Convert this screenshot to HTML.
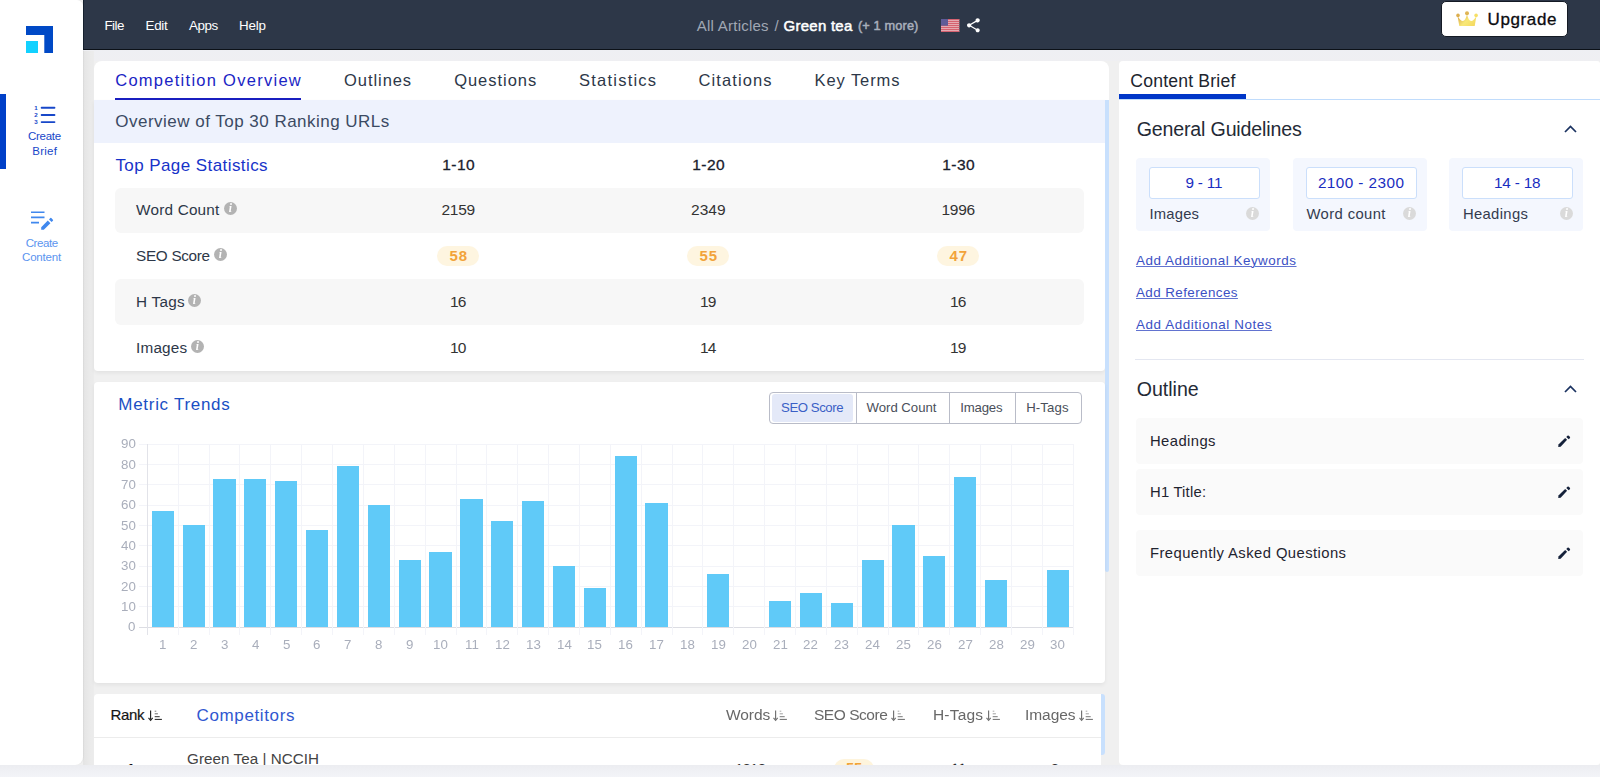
<!DOCTYPE html>
<html lang="en">
<head>
<meta charset="utf-8">
<title>Content Brief - Green tea</title>
<style>

*{box-sizing:border-box;margin:0;padding:0}
html,body{width:1600px;height:777px;overflow:hidden;background:#f0f0f0}
body{font-family:"Liberation Sans",Arial,sans-serif;color:#2d3748}
#app{position:relative;width:1600px;height:777px;overflow:hidden;background:#f0f0f0}
.w{display:contents}
.b{position:absolute}
.t{position:absolute;white-space:pre;display:block}
svg{position:absolute;overflow:visible}
.g{will-change:transform}
.u{text-decoration:underline;text-underline-offset:1px;text-decoration-thickness:1px;text-decoration-color:rgba(59,80,196,.8)}

</style>
</head>
<body>
<div id="app">
<div class="b " style="left:83px;top:49px;width:1517px;height:12px;background:linear-gradient(#eeeff3,#efeff2);"></div>
<aside class="w" aria-label="Sidebar">
<div class="b " style="left:83px;top:51px;width:11px;height:714px;background:linear-gradient(to right,#e4e4e4,#eaeaea 60%,#ececec);"></div>
<div class="b sidebar" style="left:0px;top:0px;width:83px;height:765px;background:#fff;border-radius:0 6px 8px 0;box-shadow:1px 0 1px rgba(0,0,0,.04)"></div>
<svg style="left:26px;top:26px" width="27" height="27" viewBox="0 0 27 27"><path d="M0 0H27V27H18.3V8.9H0Z" fill="#0049c6"/><rect x="0" y="15" width="12" height="12" fill="#12d1ff"/></svg>
<div class="b " style="left:0px;top:94px;width:6px;height:75px;background:#0040c8;"></div>
<svg style="left:33px;top:105px" width="24" height="20" viewBox="0 0 24 20" fill="none">
<path d="M8.600 2.750H21.500M8.600 10H21.500M8.600 17.100H21.500" stroke="#1747c9" stroke-width="1.800" stroke-linecap="round"/>
<text x="1.200" y="4.900" font-size="6.200" font-weight="700" fill="#1747c9" font-family="Liberation Sans,sans-serif">1</text>
<text x="1.200" y="12.100" font-size="6.200" font-weight="700" fill="#1747c9" font-family="Liberation Sans,sans-serif">2</text>
<text x="1.200" y="19.400" font-size="6.200" font-weight="700" fill="#1747c9" font-family="Liberation Sans,sans-serif">3</text>
</svg>
<span class="t " style="left:28.10px;top:128px;font-size:11.5px;line-height:16px;color:#1747c9;letter-spacing:-0.306px;">Create</span>
<span class="t " style="left:32.35px;top:143px;font-size:11.5px;line-height:16px;color:#1747c9;letter-spacing:0.211px;">Brief</span>
<svg style="left:30px;top:210px" width="24" height="21" viewBox="0 0 24 21" fill="none">
<path d="M1 2.2H14.5M1 7.4H14.5M1 12.6H9" stroke="#4088ee" stroke-width="1.6"/>
<path d="M11.2 19.8v-2.6l6.6-6.6 2.6 2.6-6.6 6.6zM19 9.4l1.3-1.3a.7.7 0 0 1 1 0l1.6 1.6a.7.7 0 0 1 0 1l-1.3 1.3z" fill="#4088ee"/>
</svg>
<span class="t " style="left:25.65px;top:235px;font-size:11.5px;line-height:16px;color:#5b94ef;letter-spacing:-0.406px;">Create</span>
<span class="t " style="left:22.10px;top:249px;font-size:11.5px;line-height:16px;color:#5b94ef;letter-spacing:-0.214px;">Content</span>
</aside>
<header class="w">
<div class="b topbar" style="left:83px;top:0px;width:1517px;height:49.5px;background:#2d3748;border-bottom:1.5px solid #0c1118;border-left:1px solid #15202e"></div>
<span class="t " style="left:104.40px;top:16px;font-size:13.4px;line-height:19px;color:#fff;letter-spacing:-0.493px;">File</span>
<span class="t " style="left:145.60px;top:16px;font-size:13.4px;line-height:19px;color:#fff;letter-spacing:-0.326px;">Edit</span>
<span class="t " style="left:188.90px;top:16px;font-size:13.4px;line-height:19px;color:#fff;letter-spacing:-0.410px;">Apps</span>
<span class="t " style="left:239.00px;top:16px;font-size:13.4px;line-height:19px;color:#fff;letter-spacing:-0.182px;">Help</span>
<span class="t " style="left:696.80px;top:15px;font-size:15px;line-height:21px;color:#a0a7b4;letter-spacing:0.237px;">All Articles</span>
<span class="t " style="left:774.50px;top:15px;font-size:15px;line-height:21px;color:#a0a7b4;">/</span>
<span class="t " style="left:783.50px;top:15px;font-size:15px;line-height:21px;color:#fff;letter-spacing:0.260px;-webkit-text-stroke:.5px #fff">Green tea</span>
<span class="t " style="left:857.90px;top:16px;font-size:12.8px;line-height:19px;color:#a8aebb;letter-spacing:0.123px;-webkit-text-stroke:.5px #a8aebb">(+ 1 more)</span>
<svg style="left:941px;top:19px" width="18.300" height="13" viewBox="0 0 18.300 13">
<rect width="18.300" height="13" fill="#e5a9b2"/>
<path d="M0 .5H18.300M0 2.500H18.300M0 4.500H18.300M0 6.500H18.300M0 8.500H18.300M0 10.500H18.300M0 12.500H18.300" stroke="#d5616f" stroke-width="1"/>
<rect width="7" height="6.700" fill="#5f5b97"/>
</svg>
<svg style="left:966.8px;top:17.8px" width="12.8" height="14.6" viewBox="3 2 18 20" fill="#fff">
<path d="M18 16.08c-.76 0-1.44.3-1.96.77L8.91 12.7c.05-.23.09-.46.09-.7s-.04-.47-.09-.7l7.05-4.11c.54.5 1.25.81 2.04.81 1.66 0 3-1.34 3-3s-1.34-3-3-3-3 1.34-3 3c0 .24.04.47.09.7L8.04 9.81C7.5 9.31 6.79 9 6 9c-1.66 0-3 1.34-3 3s1.34 3 3 3c.79 0 1.5-.31 2.04-.81l7.12 4.16c-.05.21-.08.43-.08.65 0 1.61 1.31 2.92 2.92 2.92 1.61 0 2.92-1.31 2.92-2.92s-1.31-2.92-2.92-2.92z"/></svg>
<div class="b upgrade" style="left:1441px;top:1px;width:127px;height:36px;background:#fff;border-radius:5px;border:1px solid #141a24"></div>
<svg style="left:1456px;top:11px" width="22" height="15" viewBox="0 0 22 15">
<defs><linearGradient id="cg" x1="0" y1="0.2" x2="1" y2="0.8"><stop offset="0" stop-color="#d9a94a"/><stop offset=".5" stop-color="#f8e878"/><stop offset="1" stop-color="#f4d95f"/></linearGradient></defs>
<path d="M3.3 15 1.6 5.2C3.6 8.4 5.2 10 6.8 10 8.6 10 10 7.4 11 3.6 12 7.4 13.4 10 15.2 10 16.800 10 18.4 8.400 20.400 5.200L18.700 15Z" fill="url(#cg)"/>
<circle cx="11" cy="2.300" r="2" fill="#dfb555"/><circle cx="2" cy="4.400" r="1.800" fill="#dcae4f"/><circle cx="20.100" cy="4.400" r="1.800" fill="#f6df66"/>
</svg>
<span class="t " style="left:1487.50px;top:8px;font-size:17px;line-height:23px;color:#0b0b0f;letter-spacing:0.630px;-webkit-text-stroke:.3px #0b0b0f">Upgrade</span>
</header>
<main class="w">
<nav class="w" aria-label="Tabs">
<div class="b tabs" style="left:94px;top:61px;width:1015px;height:39.5px;background:#fff;border-radius:8px 8px 0 0"></div>
<span class="t " style="left:115.20px;top:69px;font-size:16.5px;line-height:22px;color:#1a24c4;letter-spacing:1.274px;">Competition Overview</span>
<div class="b " style="left:115px;top:98.2px;width:186px;height:1.8px;background:#1a1fc0;"></div>
<span class="t " style="left:344.10px;top:69px;font-size:16.5px;line-height:22px;color:#2d3748;letter-spacing:0.924px;">Outlines</span>
<span class="t " style="left:454.20px;top:69px;font-size:16.5px;line-height:22px;color:#2d3748;letter-spacing:0.963px;">Questions</span>
<span class="t " style="left:579.10px;top:69px;font-size:16.5px;line-height:22px;color:#2d3748;letter-spacing:1.219px;">Statistics</span>
<span class="t " style="left:698.50px;top:69px;font-size:16.5px;line-height:22px;color:#2d3748;letter-spacing:1.100px;">Citations</span>
<span class="t " style="left:814.50px;top:69px;font-size:16.5px;line-height:22px;color:#2d3748;letter-spacing:0.920px;">Key Terms</span>
</nav>
<section class="w" aria-label="Overview">
<div class="b panel" style="left:94px;top:100px;width:1011px;height:271px;background:#fff;border-radius:0 0 4px 4px;box-shadow:0 2px 4px rgba(0,0,0,.06)"></div>
<div class="b " style="left:94px;top:100px;width:1011px;height:42.6px;background:#eef2fd;"></div>
<span class="t " style="left:115.30px;top:110px;font-size:17px;line-height:23px;color:#3b4a63;letter-spacing:0.482px;">Overview of Top 30 Ranking URLs</span>
<span class="t " style="left:115.40px;top:154px;font-size:17px;line-height:23px;color:#1733c9;letter-spacing:0.423px;">Top Page Statistics</span>
<span class="t " style="left:442.30px;top:154px;font-size:15.5px;line-height:21px;color:#1a202c;letter-spacing:0.456px;-webkit-text-stroke:.3px #1a202c">1-10</span>
<span class="t " style="left:692.30px;top:154px;font-size:15.5px;line-height:21px;color:#1a202c;letter-spacing:0.456px;-webkit-text-stroke:.3px #1a202c">1-20</span>
<span class="t " style="left:942.30px;top:154px;font-size:15.5px;line-height:21px;color:#1a202c;letter-spacing:0.456px;-webkit-text-stroke:.3px #1a202c">1-30</span>
<div class="b " style="left:115px;top:187.9px;width:969px;height:45.3px;background:#f7f7f7;border-radius:6px"></div>
<span class="t " style="left:136.10px;top:199px;font-size:15.3px;line-height:21px;color:#2d3748;letter-spacing:0.206px;">Word Count</span>
<div class="b g" style="left:223.9px;top:202.2px;width:13px;height:13px;border-radius:50%;background:#b3b3b3;color:#fff;font:italic 700 11.5px/13px 'Liberation Serif',serif;text-align:center;text-indent:-.5px">i</div>
<span class="t " style="left:441.55px;top:199px;font-size:15.5px;line-height:21px;color:#333;letter-spacing:-0.328px;">2159</span>
<span class="t " style="left:691.05px;top:199px;font-size:15.5px;line-height:21px;color:#333;letter-spacing:0.005px;">2349</span>
<span class="t " style="left:941.55px;top:199px;font-size:15.5px;line-height:21px;color:#333;letter-spacing:-0.328px;">1996</span>
<span class="t " style="left:136.10px;top:245px;font-size:15.3px;line-height:21px;color:#2d3748;letter-spacing:-0.314px;">SEO Score</span>
<div class="b g" style="left:213.7px;top:248.2px;width:13px;height:13px;border-radius:50%;background:#b3b3b3;color:#fff;font:italic 700 11.5px/13px 'Liberation Serif',serif;text-align:center;text-indent:-.5px">i</div>
<div class="b " style="left:437.3px;top:246.3px;width:42px;height:20px;background:#fef5e0;border-radius:10px"></div>
<span class="t " style="left:449.40px;top:245px;font-size:15px;line-height:21px;color:#f2a33a;font-weight:700;letter-spacing:1.113px;">58</span>
<div class="b " style="left:687.3px;top:246.3px;width:42px;height:20px;background:#fef5e0;border-radius:10px"></div>
<span class="t " style="left:699.40px;top:245px;font-size:15px;line-height:21px;color:#f2a33a;font-weight:700;letter-spacing:1.113px;">55</span>
<div class="b " style="left:937.3px;top:246.3px;width:42px;height:20px;background:#fef5e0;border-radius:10px"></div>
<span class="t " style="left:949.40px;top:245px;font-size:15px;line-height:21px;color:#f2a33a;font-weight:700;letter-spacing:1.113px;">47</span>
<div class="b " style="left:115px;top:279.4px;width:969px;height:45.3px;background:#f7f7f7;border-radius:6px"></div>
<span class="t " style="left:136.10px;top:291px;font-size:15.3px;line-height:21px;color:#2d3748;letter-spacing:0.231px;">H Tags</span>
<div class="b g" style="left:188.2px;top:294.2px;width:13px;height:13px;border-radius:50%;background:#b3b3b3;color:#fff;font:italic 700 11.5px/13px 'Liberation Serif',serif;text-align:center;text-indent:-.5px">i</div>
<span class="t " style="left:450.10px;top:291px;font-size:15.5px;line-height:21px;color:#333;letter-spacing:-0.850px;">16</span>
<span class="t " style="left:700.10px;top:291px;font-size:15.5px;line-height:21px;color:#333;letter-spacing:-0.850px;">19</span>
<span class="t " style="left:950.10px;top:291px;font-size:15.5px;line-height:21px;color:#333;letter-spacing:-0.850px;">16</span>
<span class="t " style="left:136.10px;top:337px;font-size:15.3px;line-height:21px;color:#2d3748;letter-spacing:0.166px;">Images</span>
<div class="b g" style="left:190.5px;top:340.2px;width:13px;height:13px;border-radius:50%;background:#b3b3b3;color:#fff;font:italic 700 11.5px/13px 'Liberation Serif',serif;text-align:center;text-indent:-.5px">i</div>
<span class="t " style="left:450.10px;top:337px;font-size:15.5px;line-height:21px;color:#333;letter-spacing:-0.850px;">10</span>
<span class="t " style="left:700.10px;top:337px;font-size:15.5px;line-height:21px;color:#333;letter-spacing:-0.850px;">14</span>
<span class="t " style="left:950.10px;top:337px;font-size:15.5px;line-height:21px;color:#333;letter-spacing:-0.850px;">19</span>
<div class="b " style="left:1105px;top:100px;width:4px;height:472px;background:#c8e0fd;border-radius:0 0 3px 3px"></div>
</section>
<section class="w" aria-label="Metric Trends">
<div class="b panel" style="left:94px;top:382px;width:1011px;height:301px;background:#fff;border-radius:4px;box-shadow:0 2px 4px rgba(0,0,0,.06)"></div>
<span class="t " style="left:118.30px;top:393px;font-size:17px;line-height:23px;color:#1a4fc4;letter-spacing:0.710px;">Metric Trends</span>
<div class="b " style="left:769px;top:392px;width:313px;height:32px;background:#fff;border:1px solid #b9bcc8;border-radius:4px"></div>
<div class="b " style="left:772px;top:394px;width:81px;height:28px;background:#e4e9f8;border-radius:3px"></div>
<div class="b " style="left:856px;top:393px;width:1px;height:30px;background:#b9bcc8;"></div>
<div class="b " style="left:949px;top:393px;width:1px;height:30px;background:#b9bcc8;"></div>
<div class="b " style="left:1015px;top:393px;width:1px;height:30px;background:#b9bcc8;"></div>
<span class="t " style="left:781.05px;top:398px;font-size:13.2px;line-height:19px;color:#3a5fc6;letter-spacing:-0.434px;">SEO Score</span>
<span class="t " style="left:866.50px;top:398px;font-size:13.2px;line-height:19px;color:#4a4f5a;letter-spacing:-0.014px;">Word Count</span>
<span class="t " style="left:960.15px;top:398px;font-size:13.2px;line-height:19px;color:#4a4f5a;letter-spacing:-0.150px;">Images</span>
<span class="t " style="left:1026.15px;top:398px;font-size:13.2px;line-height:19px;color:#4a4f5a;letter-spacing:0.144px;">H-Tags</span>
<div class="b " style="left:138.9px;top:626.6px;width:934.3px;height:1px;background:#dcdde3;"></div>
<span class="t g" style="left:127.99px;top:617px;font-size:13.3px;line-height:19px;color:#a9aebb;">0</span>
<div class="b " style="left:138.9px;top:606.27px;width:934.3px;height:1px;background:#f3f4f9;"></div>
<span class="t g" style="left:120.60px;top:597px;font-size:13.3px;line-height:19px;color:#a9aebb;">10</span>
<div class="b " style="left:138.9px;top:585.93px;width:934.3px;height:1px;background:#f3f4f9;"></div>
<span class="t g" style="left:120.60px;top:577px;font-size:13.3px;line-height:19px;color:#a9aebb;">20</span>
<div class="b " style="left:138.9px;top:565.6px;width:934.3px;height:1px;background:#f3f4f9;"></div>
<span class="t g" style="left:120.60px;top:556px;font-size:13.3px;line-height:19px;color:#a9aebb;">30</span>
<div class="b " style="left:138.9px;top:545.27px;width:934.3px;height:1px;background:#f3f4f9;"></div>
<span class="t g" style="left:120.60px;top:536px;font-size:13.3px;line-height:19px;color:#a9aebb;">40</span>
<div class="b " style="left:138.9px;top:524.93px;width:934.3px;height:1px;background:#f3f4f9;"></div>
<span class="t g" style="left:120.60px;top:516px;font-size:13.3px;line-height:19px;color:#a9aebb;">50</span>
<div class="b " style="left:138.9px;top:504.6px;width:934.3px;height:1px;background:#f3f4f9;"></div>
<span class="t g" style="left:120.60px;top:495px;font-size:13.3px;line-height:19px;color:#a9aebb;">60</span>
<div class="b " style="left:138.9px;top:484.27px;width:934.3px;height:1px;background:#f3f4f9;"></div>
<span class="t g" style="left:120.60px;top:475px;font-size:13.3px;line-height:19px;color:#a9aebb;">70</span>
<div class="b " style="left:138.9px;top:463.93px;width:934.3px;height:1px;background:#f3f4f9;"></div>
<span class="t g" style="left:120.60px;top:455px;font-size:13.3px;line-height:19px;color:#a9aebb;">80</span>
<div class="b " style="left:138.9px;top:443.6px;width:934.3px;height:1px;background:#f3f4f9;"></div>
<span class="t g" style="left:120.60px;top:434px;font-size:13.3px;line-height:19px;color:#a9aebb;">90</span>
<div class="b " style="left:146.9px;top:444.1px;width:1px;height:191.0px;background:#e2e3e9;"></div>
<div class="b " style="left:177.76px;top:444.1px;width:1px;height:191.0px;background:#f3f4f9;"></div>
<div class="b " style="left:208.62px;top:444.1px;width:1px;height:191.0px;background:#f3f4f9;"></div>
<div class="b " style="left:239.48px;top:444.1px;width:1px;height:191.0px;background:#f3f4f9;"></div>
<div class="b " style="left:270.34px;top:444.1px;width:1px;height:191.0px;background:#f3f4f9;"></div>
<div class="b " style="left:301.2px;top:444.1px;width:1px;height:191.0px;background:#f3f4f9;"></div>
<div class="b " style="left:332.06px;top:444.1px;width:1px;height:191.0px;background:#f3f4f9;"></div>
<div class="b " style="left:362.92px;top:444.1px;width:1px;height:191.0px;background:#f3f4f9;"></div>
<div class="b " style="left:393.78px;top:444.1px;width:1px;height:191.0px;background:#f3f4f9;"></div>
<div class="b " style="left:424.64px;top:444.1px;width:1px;height:191.0px;background:#f3f4f9;"></div>
<div class="b " style="left:455.5px;top:444.1px;width:1px;height:191.0px;background:#f3f4f9;"></div>
<div class="b " style="left:486.36px;top:444.1px;width:1px;height:191.0px;background:#f3f4f9;"></div>
<div class="b " style="left:517.22px;top:444.1px;width:1px;height:191.0px;background:#f3f4f9;"></div>
<div class="b " style="left:548.08px;top:444.1px;width:1px;height:191.0px;background:#f3f4f9;"></div>
<div class="b " style="left:578.94px;top:444.1px;width:1px;height:191.0px;background:#f3f4f9;"></div>
<div class="b " style="left:609.8px;top:444.1px;width:1px;height:191.0px;background:#f3f4f9;"></div>
<div class="b " style="left:640.66px;top:444.1px;width:1px;height:191.0px;background:#f3f4f9;"></div>
<div class="b " style="left:671.52px;top:444.1px;width:1px;height:191.0px;background:#f3f4f9;"></div>
<div class="b " style="left:702.38px;top:444.1px;width:1px;height:191.0px;background:#f3f4f9;"></div>
<div class="b " style="left:733.24px;top:444.1px;width:1px;height:191.0px;background:#f3f4f9;"></div>
<div class="b " style="left:764.1px;top:444.1px;width:1px;height:191.0px;background:#f3f4f9;"></div>
<div class="b " style="left:794.96px;top:444.1px;width:1px;height:191.0px;background:#f3f4f9;"></div>
<div class="b " style="left:825.82px;top:444.1px;width:1px;height:191.0px;background:#f3f4f9;"></div>
<div class="b " style="left:856.68px;top:444.1px;width:1px;height:191.0px;background:#f3f4f9;"></div>
<div class="b " style="left:887.54px;top:444.1px;width:1px;height:191.0px;background:#f3f4f9;"></div>
<div class="b " style="left:918.4px;top:444.1px;width:1px;height:191.0px;background:#f3f4f9;"></div>
<div class="b " style="left:949.26px;top:444.1px;width:1px;height:191.0px;background:#f3f4f9;"></div>
<div class="b " style="left:980.12px;top:444.1px;width:1px;height:191.0px;background:#f3f4f9;"></div>
<div class="b " style="left:1010.98px;top:444.1px;width:1px;height:191.0px;background:#f3f4f9;"></div>
<div class="b " style="left:1041.84px;top:444.1px;width:1px;height:191.0px;background:#f3f4f9;"></div>
<div class="b " style="left:1072.7px;top:444.1px;width:1px;height:191.0px;background:#f3f4f9;"></div>
<div class="b " style="left:151.73px;top:511.2px;width:22.2px;height:115.9px;background:#60caf8;"></div>
<span class="t g" style="left:159.13px;top:635px;font-size:13.3px;line-height:19px;color:#a9aebb;">1</span>
<div class="b " style="left:182.59px;top:525.43px;width:22.2px;height:101.67px;background:#60caf8;"></div>
<span class="t g" style="left:189.99px;top:635px;font-size:13.3px;line-height:19px;color:#a9aebb;">2</span>
<div class="b " style="left:213.45px;top:478.67px;width:22.2px;height:148.43px;background:#60caf8;"></div>
<span class="t g" style="left:220.85px;top:635px;font-size:13.3px;line-height:19px;color:#a9aebb;">3</span>
<div class="b " style="left:244.31px;top:478.67px;width:22.2px;height:148.43px;background:#60caf8;"></div>
<span class="t g" style="left:251.71px;top:635px;font-size:13.3px;line-height:19px;color:#a9aebb;">4</span>
<div class="b " style="left:275.17px;top:480.7px;width:22.2px;height:146.4px;background:#60caf8;"></div>
<span class="t g" style="left:282.57px;top:635px;font-size:13.3px;line-height:19px;color:#a9aebb;">5</span>
<div class="b " style="left:306.03px;top:529.5px;width:22.2px;height:97.6px;background:#60caf8;"></div>
<span class="t g" style="left:313.43px;top:635px;font-size:13.3px;line-height:19px;color:#a9aebb;">6</span>
<div class="b " style="left:336.89px;top:466.47px;width:22.2px;height:160.63px;background:#60caf8;"></div>
<span class="t g" style="left:344.29px;top:635px;font-size:13.3px;line-height:19px;color:#a9aebb;">7</span>
<div class="b " style="left:367.75px;top:505.1px;width:22.2px;height:122.0px;background:#60caf8;"></div>
<span class="t g" style="left:375.15px;top:635px;font-size:13.3px;line-height:19px;color:#a9aebb;">8</span>
<div class="b " style="left:398.61px;top:560.0px;width:22.2px;height:67.1px;background:#60caf8;"></div>
<span class="t g" style="left:406.01px;top:635px;font-size:13.3px;line-height:19px;color:#a9aebb;">9</span>
<div class="b " style="left:429.47px;top:551.87px;width:22.2px;height:75.23px;background:#60caf8;"></div>
<span class="t g" style="left:433.17px;top:635px;font-size:13.3px;line-height:19px;color:#a9aebb;">10</span>
<div class="b " style="left:460.33px;top:499.0px;width:22.2px;height:128.1px;background:#60caf8;"></div>
<span class="t g" style="left:464.52px;top:635px;font-size:13.3px;line-height:19px;color:#a9aebb;">11</span>
<div class="b " style="left:491.19px;top:521.37px;width:22.2px;height:105.73px;background:#60caf8;"></div>
<span class="t g" style="left:494.89px;top:635px;font-size:13.3px;line-height:19px;color:#a9aebb;">12</span>
<div class="b " style="left:522.05px;top:501.03px;width:22.2px;height:126.07px;background:#60caf8;"></div>
<span class="t g" style="left:525.75px;top:635px;font-size:13.3px;line-height:19px;color:#a9aebb;">13</span>
<div class="b " style="left:552.91px;top:566.1px;width:22.2px;height:61.0px;background:#60caf8;"></div>
<span class="t g" style="left:556.61px;top:635px;font-size:13.3px;line-height:19px;color:#a9aebb;">14</span>
<div class="b " style="left:583.77px;top:588.47px;width:22.2px;height:38.63px;background:#60caf8;"></div>
<span class="t g" style="left:587.47px;top:635px;font-size:13.3px;line-height:19px;color:#a9aebb;">15</span>
<div class="b " style="left:614.63px;top:456.3px;width:22.2px;height:170.8px;background:#60caf8;"></div>
<span class="t g" style="left:618.33px;top:635px;font-size:13.3px;line-height:19px;color:#a9aebb;">16</span>
<div class="b " style="left:645.49px;top:503.07px;width:22.2px;height:124.03px;background:#60caf8;"></div>
<span class="t g" style="left:649.19px;top:635px;font-size:13.3px;line-height:19px;color:#a9aebb;">17</span>
<span class="t g" style="left:680.05px;top:635px;font-size:13.3px;line-height:19px;color:#a9aebb;">18</span>
<div class="b " style="left:707.21px;top:574.23px;width:22.2px;height:52.87px;background:#60caf8;"></div>
<span class="t g" style="left:710.91px;top:635px;font-size:13.3px;line-height:19px;color:#a9aebb;">19</span>
<span class="t g" style="left:741.77px;top:635px;font-size:13.3px;line-height:19px;color:#a9aebb;">20</span>
<div class="b " style="left:768.93px;top:600.67px;width:22.2px;height:26.43px;background:#60caf8;"></div>
<span class="t g" style="left:772.63px;top:635px;font-size:13.3px;line-height:19px;color:#a9aebb;">21</span>
<div class="b " style="left:799.79px;top:592.53px;width:22.2px;height:34.57px;background:#60caf8;"></div>
<span class="t g" style="left:803.49px;top:635px;font-size:13.3px;line-height:19px;color:#a9aebb;">22</span>
<div class="b " style="left:830.65px;top:602.7px;width:22.2px;height:24.4px;background:#60caf8;"></div>
<span class="t g" style="left:834.35px;top:635px;font-size:13.3px;line-height:19px;color:#a9aebb;">23</span>
<div class="b " style="left:861.51px;top:560.0px;width:22.2px;height:67.1px;background:#60caf8;"></div>
<span class="t g" style="left:865.21px;top:635px;font-size:13.3px;line-height:19px;color:#a9aebb;">24</span>
<div class="b " style="left:892.37px;top:525.43px;width:22.2px;height:101.67px;background:#60caf8;"></div>
<span class="t g" style="left:896.07px;top:635px;font-size:13.3px;line-height:19px;color:#a9aebb;">25</span>
<div class="b " style="left:923.23px;top:555.93px;width:22.2px;height:71.17px;background:#60caf8;"></div>
<span class="t g" style="left:926.93px;top:635px;font-size:13.3px;line-height:19px;color:#a9aebb;">26</span>
<div class="b " style="left:954.09px;top:476.63px;width:22.2px;height:150.47px;background:#60caf8;"></div>
<span class="t g" style="left:957.79px;top:635px;font-size:13.3px;line-height:19px;color:#a9aebb;">27</span>
<div class="b " style="left:984.95px;top:580.33px;width:22.2px;height:46.77px;background:#60caf8;"></div>
<span class="t g" style="left:988.65px;top:635px;font-size:13.3px;line-height:19px;color:#a9aebb;">28</span>
<span class="t g" style="left:1019.51px;top:635px;font-size:13.3px;line-height:19px;color:#a9aebb;">29</span>
<div class="b " style="left:1046.67px;top:570.17px;width:22.2px;height:56.93px;background:#60caf8;"></div>
<span class="t g" style="left:1050.37px;top:635px;font-size:13.3px;line-height:19px;color:#a9aebb;">30</span>
</section>
<section class="w" aria-label="Competitors">
<div class="b panel" style="left:94px;top:693.6px;width:1007px;height:80px;background:#fff;border-radius:4px 0 0 0"></div>
<div class="b " style="left:1101px;top:693.6px;width:4px;height:61.2px;background:#c8e0fd;border-radius:0 3px 3px 0"></div>
<div class="b " style="left:94px;top:737px;width:1007px;height:1px;background:#ececec;"></div>
<span class="t " style="left:110.60px;top:704px;font-size:15px;line-height:21px;color:#151515;letter-spacing:-0.377px;-webkit-text-stroke:.2px #151515">Rank</span>
<svg style="left:148.4px;top:710px" width="14" height="11" viewBox="0 0 14 11" fill="none" stroke="#222"><path d="M2.6 .5V9.6" stroke-width="1.15"/><path d="M.5 7.9 2.6 10.3 4.7 7.9" stroke-width="1.15"/><path d="M6.7 1.2H8.3" stroke-width=".8" opacity=".75"/><path d="M6.7 3.8H9.9" stroke-width=".85" opacity=".8"/><path d="M6.7 6.7H11.7" stroke-width=".95"/><path d="M6.7 9.4H13.9" stroke-width="1.05"/></svg>
<span class="t " style="left:196.50px;top:704px;font-size:17px;line-height:23px;color:#3158d0;letter-spacing:0.636px;">Competitors</span>
<span class="t g" style="left:725.50px;top:704px;font-size:15.5px;line-height:21px;color:#686868;letter-spacing:-0.054px;">Words</span>
<svg style="left:773px;top:710px" width="14" height="11" viewBox="0 0 14 11" fill="none" stroke="#707070"><path d="M2.6 .5V9.6" stroke-width="1.15"/><path d="M.5 7.9 2.6 10.3 4.7 7.9" stroke-width="1.15"/><path d="M6.7 1.2H8.3" stroke-width=".8" opacity=".75"/><path d="M6.7 3.8H9.9" stroke-width=".85" opacity=".8"/><path d="M6.7 6.7H11.7" stroke-width=".95"/><path d="M6.7 9.4H13.9" stroke-width="1.05"/></svg>
<span class="t g" style="left:814.20px;top:704px;font-size:15.5px;line-height:21px;color:#686868;letter-spacing:-0.466px;">SEO Score</span>
<svg style="left:891px;top:710px" width="14" height="11" viewBox="0 0 14 11" fill="none" stroke="#707070"><path d="M2.6 .5V9.6" stroke-width="1.15"/><path d="M.5 7.9 2.6 10.3 4.7 7.9" stroke-width="1.15"/><path d="M6.7 1.2H8.3" stroke-width=".8" opacity=".75"/><path d="M6.7 3.8H9.9" stroke-width=".85" opacity=".8"/><path d="M6.7 6.7H11.7" stroke-width=".95"/><path d="M6.7 9.4H13.9" stroke-width="1.05"/></svg>
<span class="t g" style="left:932.50px;top:704px;font-size:15.5px;line-height:21px;color:#686868;letter-spacing:0.178px;">H-Tags</span>
<svg style="left:986px;top:710px" width="14" height="11" viewBox="0 0 14 11" fill="none" stroke="#707070"><path d="M2.6 .5V9.6" stroke-width="1.15"/><path d="M.5 7.9 2.6 10.3 4.7 7.9" stroke-width="1.15"/><path d="M6.7 1.2H8.3" stroke-width=".8" opacity=".75"/><path d="M6.7 3.8H9.9" stroke-width=".85" opacity=".8"/><path d="M6.7 6.7H11.7" stroke-width=".95"/><path d="M6.7 9.4H13.9" stroke-width="1.05"/></svg>
<span class="t g" style="left:1025.00px;top:704px;font-size:15.5px;line-height:21px;color:#686868;letter-spacing:-0.049px;">Images</span>
<svg style="left:1079px;top:710px" width="14" height="11" viewBox="0 0 14 11" fill="none" stroke="#707070"><path d="M2.6 .5V9.6" stroke-width="1.15"/><path d="M.5 7.9 2.6 10.3 4.7 7.9" stroke-width="1.15"/><path d="M6.7 1.2H8.3" stroke-width=".8" opacity=".75"/><path d="M6.7 3.8H9.9" stroke-width=".85" opacity=".8"/><path d="M6.7 6.7H11.7" stroke-width=".95"/><path d="M6.7 9.4H13.9" stroke-width="1.05"/></svg>
<span class="t " style="left:187.10px;top:748px;font-size:15.2px;line-height:21px;color:#444;letter-spacing:0.055px;">Green Tea | NCCIH</span>
<span class="t " style="left:126.83px;top:758px;font-size:15px;line-height:21px;color:#111;font-weight:700;">1</span>
<span class="t " style="left:735.00px;top:758px;font-size:15px;line-height:21px;color:#333;letter-spacing:-0.792px;">1818</span>
<div class="b " style="left:834px;top:758.7px;width:40px;height:20px;background:#fef4dc;border-radius:10px"></div>
<span class="t " style="left:845.88px;top:758px;font-size:14.6px;line-height:20px;color:#f0a33a;font-weight:700;">55</span>
<span class="t " style="left:950.71px;top:758px;font-size:15px;line-height:21px;color:#222;-webkit-text-stroke:.3px #222">11</span>
<span class="t " style="left:1050.83px;top:758px;font-size:15px;line-height:21px;color:#333;">8</span>
</section>
</main>
<aside class="w" aria-label="Content Brief">
<div class="b brief" style="left:1119px;top:61px;width:481px;height:704px;background:#fff;border-radius:4px 3px 3px 4px"></div>
<span class="t " style="left:1130.30px;top:69px;font-size:17.6px;line-height:24px;color:#20242e;letter-spacing:0.193px;">Content Brief</span>
<div class="b " style="left:1119px;top:99px;width:481px;height:1px;background:#c0dcfc;"></div>
<div class="b " style="left:1119px;top:94px;width:127px;height:5px;background:#0036c8;"></div>
<span class="t " style="left:1136.70px;top:116px;font-size:19.6px;line-height:26px;color:#242a36;letter-spacing:-0.161px;">General Guidelines</span>
<svg style="left:1563.5px;top:124.8px" width="13" height="8" viewBox="0 0 13 8" fill="none"><path d="M1 7 6.5 1.5 12 7" stroke="#1b3361" stroke-width="1.75"/></svg>
<div class="b " style="left:1136px;top:158px;width:134px;height:73px;background:#f4f7fe;border-radius:4px"></div>
<div class="b " style="left:1149px;top:167px;width:111px;height:32px;background:#fff;border:1px solid #cbdffb;border-radius:3px"></div>
<span class="t " style="left:1185.40px;top:172px;font-size:15.3px;line-height:21px;color:#1a2dc0;letter-spacing:-0.197px;">9 - 11</span>
<span class="t " style="left:1149.50px;top:204px;font-size:14.8px;line-height:20px;color:#333b4e;letter-spacing:0.194px;">Images</span>
<div class="b g" style="left:1246.4px;top:206.7px;width:13px;height:13px;border-radius:50%;background:#dadada;color:#fff;font:italic 700 11.5px/13px 'Liberation Serif',serif;text-align:center;text-indent:-.5px">i</div>
<div class="b " style="left:1293px;top:158px;width:134px;height:73px;background:#f4f7fe;border-radius:4px"></div>
<div class="b " style="left:1306px;top:167px;width:111px;height:32px;background:#fff;border:1px solid #cbdffb;border-radius:3px"></div>
<span class="t " style="left:1317.90px;top:172px;font-size:15.3px;line-height:21px;color:#1a2dc0;letter-spacing:0.434px;">2100 - 2300</span>
<span class="t " style="left:1306.50px;top:204px;font-size:14.8px;line-height:20px;color:#333b4e;letter-spacing:0.399px;">Word count</span>
<div class="b g" style="left:1403.4px;top:206.7px;width:13px;height:13px;border-radius:50%;background:#dadada;color:#fff;font:italic 700 11.5px/13px 'Liberation Serif',serif;text-align:center;text-indent:-.5px">i</div>
<div class="b " style="left:1449.4px;top:158px;width:134px;height:73px;background:#f4f7fe;border-radius:4px"></div>
<div class="b " style="left:1462.4px;top:167px;width:111px;height:32px;background:#fff;border:1px solid #cbdffb;border-radius:3px"></div>
<span class="t " style="left:1494.05px;top:172px;font-size:15.3px;line-height:21px;color:#1a2dc0;letter-spacing:-0.188px;">14 - 18</span>
<span class="t " style="left:1462.90px;top:204px;font-size:14.8px;line-height:20px;color:#333b4e;letter-spacing:0.353px;">Headings</span>
<div class="b g" style="left:1559.8px;top:206.7px;width:13px;height:13px;border-radius:50%;background:#dadada;color:#fff;font:italic 700 11.5px/13px 'Liberation Serif',serif;text-align:center;text-indent:-.5px">i</div>
<span class="t u" style="left:1136.00px;top:251px;font-size:13.4px;line-height:19px;color:#3b50c4;letter-spacing:0.539px;">Add Additional Keywords</span>
<span class="t u" style="left:1136.00px;top:283px;font-size:13.4px;line-height:19px;color:#3b50c4;letter-spacing:0.421px;">Add References</span>
<span class="t u" style="left:1136.00px;top:315px;font-size:13.4px;line-height:19px;color:#3b50c4;letter-spacing:0.588px;">Add Additional Notes</span>
<div class="b " style="left:1135px;top:358.6px;width:449px;height:1px;background:#e4e7f1;"></div>
<span class="t " style="left:1136.70px;top:376px;font-size:19.6px;line-height:26px;color:#242a36;letter-spacing:-0.016px;">Outline</span>
<svg style="left:1563.5px;top:385px" width="13" height="8" viewBox="0 0 13 8" fill="none"><path d="M1 7 6.5 1.5 12 7" stroke="#1b3361" stroke-width="1.75"/></svg>
<div class="b " style="left:1136px;top:418px;width:447px;height:46px;background:#fafafa;border-radius:4px"></div>
<span class="t " style="left:1150.00px;top:431px;font-size:14.8px;line-height:20px;color:#1f2430;letter-spacing:0.424px;">Headings</span>
<svg style="left:1558px;top:434.8px" width="12.2" height="12.2" viewBox="0 0 12.2 12.2" fill="#15213a"><path d="M.25 12 .45 9.500 7.150 2.900 9.100 4.850 2.650 11.800Z"/><path d="M8.300 1.950 9.450.8a.95.95 0 0 1 1.350 0l1.050 1.050a.95.95 0 0 1 0 1.350L10.700 4.350Z"/></svg>
<div class="b " style="left:1136px;top:469px;width:447px;height:46px;background:#fafafa;border-radius:4px"></div>
<span class="t " style="left:1150.00px;top:482px;font-size:14.8px;line-height:20px;color:#1f2430;letter-spacing:0.215px;">H1 Title:</span>
<svg style="left:1558px;top:485.8px" width="12.2" height="12.2" viewBox="0 0 12.2 12.2" fill="#15213a"><path d="M.25 12 .45 9.500 7.150 2.900 9.100 4.850 2.650 11.800Z"/><path d="M8.300 1.950 9.450.8a.95.95 0 0 1 1.350 0l1.050 1.050a.95.95 0 0 1 0 1.350L10.700 4.350Z"/></svg>
<div class="b " style="left:1136px;top:530px;width:447px;height:46px;background:#fafafa;border-radius:4px"></div>
<span class="t " style="left:1150.00px;top:543px;font-size:14.8px;line-height:20px;color:#1f2430;letter-spacing:0.438px;">Frequently Asked Questions</span>
<svg style="left:1558px;top:546.8px" width="12.2" height="12.2" viewBox="0 0 12.2 12.2" fill="#15213a"><path d="M.25 12 .45 9.500 7.150 2.900 9.100 4.850 2.650 11.800Z"/><path d="M8.300 1.950 9.450.8a.95.95 0 0 1 1.350 0l1.050 1.050a.95.95 0 0 1 0 1.350L10.700 4.350Z"/></svg>
</aside>
<div class="b " style="left:0px;top:765px;width:1600px;height:12px;background:linear-gradient(#ecedf1,#f3f4f8);z-index:5"></div>
</div>
</body>
</html>
